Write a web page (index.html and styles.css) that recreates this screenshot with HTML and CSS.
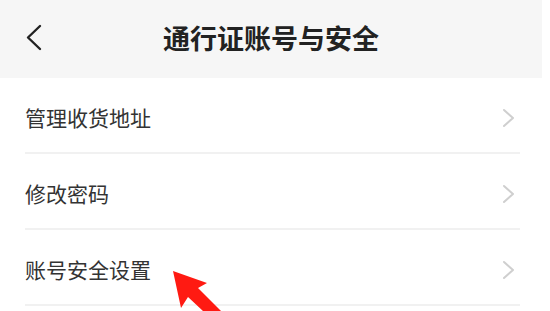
FILE: index.html
```html
<!DOCTYPE html>
<html lang="zh-CN">
<head>
<meta charset="utf-8">
<link rel="stylesheet" href="styles.css">
</head>
<body>
<div class="page">
  <header class="nav">
    <span class="back">
      <svg width="18" height="27" viewBox="0 0 18 27"><polyline points="15,2 3,13.5 15,25" fill="none" stroke="#222" stroke-width="2.4" stroke-linecap="round" stroke-linejoin="round"/></svg>
    </span>
    <h1 class="title">通行证账号与安全</h1>
    <span class="spacer"></span>
  </header>
  <ul class="list">
    <li class="row"><span class="label">管理收货地址</span><svg class="chev" width="13" height="20" viewBox="0 0 13 20"><polyline points="2,2 11,10 2,18" fill="none" stroke="#cfcfcf" stroke-width="2" stroke-linecap="round" stroke-linejoin="round"/></svg></li>
    <li class="row"><span class="label">修改密码</span><svg class="chev" width="13" height="20" viewBox="0 0 13 20"><polyline points="2,2 11,10 2,18" fill="none" stroke="#cfcfcf" stroke-width="2" stroke-linecap="round" stroke-linejoin="round"/></svg></li>
    <li class="row"><span class="label">账号安全设置</span><svg class="chev" width="13" height="20" viewBox="0 0 13 20"><polyline points="2,2 11,10 2,18" fill="none" stroke="#cfcfcf" stroke-width="2" stroke-linecap="round" stroke-linejoin="round"/></svg></li>
  </ul>
  <svg class="arrow" width="550" height="311" viewBox="0 0 550 311"><polygon points="173,271 207,283 198,288 221,311 203,311 188,297 181,308" fill="#ff1a12"/></svg>
</div>
</body>
</html>
```
FILE: styles.css
```css
html, body {
  margin: 0;
  padding: 0;
  background: #ffffff;
}
.page {
  position: relative;
  width: 550px;
  height: 311px;
  overflow: hidden;
  font-family: "Noto Sans CJK SC", "Noto Sans", sans-serif;
}
.nav {
  display: grid;
  grid-template-columns: 1fr auto 1fr;
  align-items: center;
  width: 542px;
  height: 78px;
  box-sizing: border-box;
  padding: 0 0 4px 0;
  background: #f6f6f6;
}
.back {
  display: flex;
  align-items: center;
  padding-left: 25px;
}
.title {
  margin: 0;
  font-size: 27px;
  font-weight: 700;
  color: #222;
  line-height: 1;
  letter-spacing: 0;
}
.list {
  list-style: none;
  margin: 0;
  padding: 0;
}
.row {
  display: flex;
  align-items: center;
  justify-content: space-between;
  height: 76px;
  box-sizing: border-box;
  margin: 0 30px 0 25px;
  padding: 5px 5px 0 0;
  border-bottom: 2px solid #f1f1f1;
}
.label {
  font-size: 21px;
  color: #333;
  line-height: 1;
}
.chev {
  display: block;
}
.arrow {
  position: absolute;
  left: 0;
  top: 0;
}
```
